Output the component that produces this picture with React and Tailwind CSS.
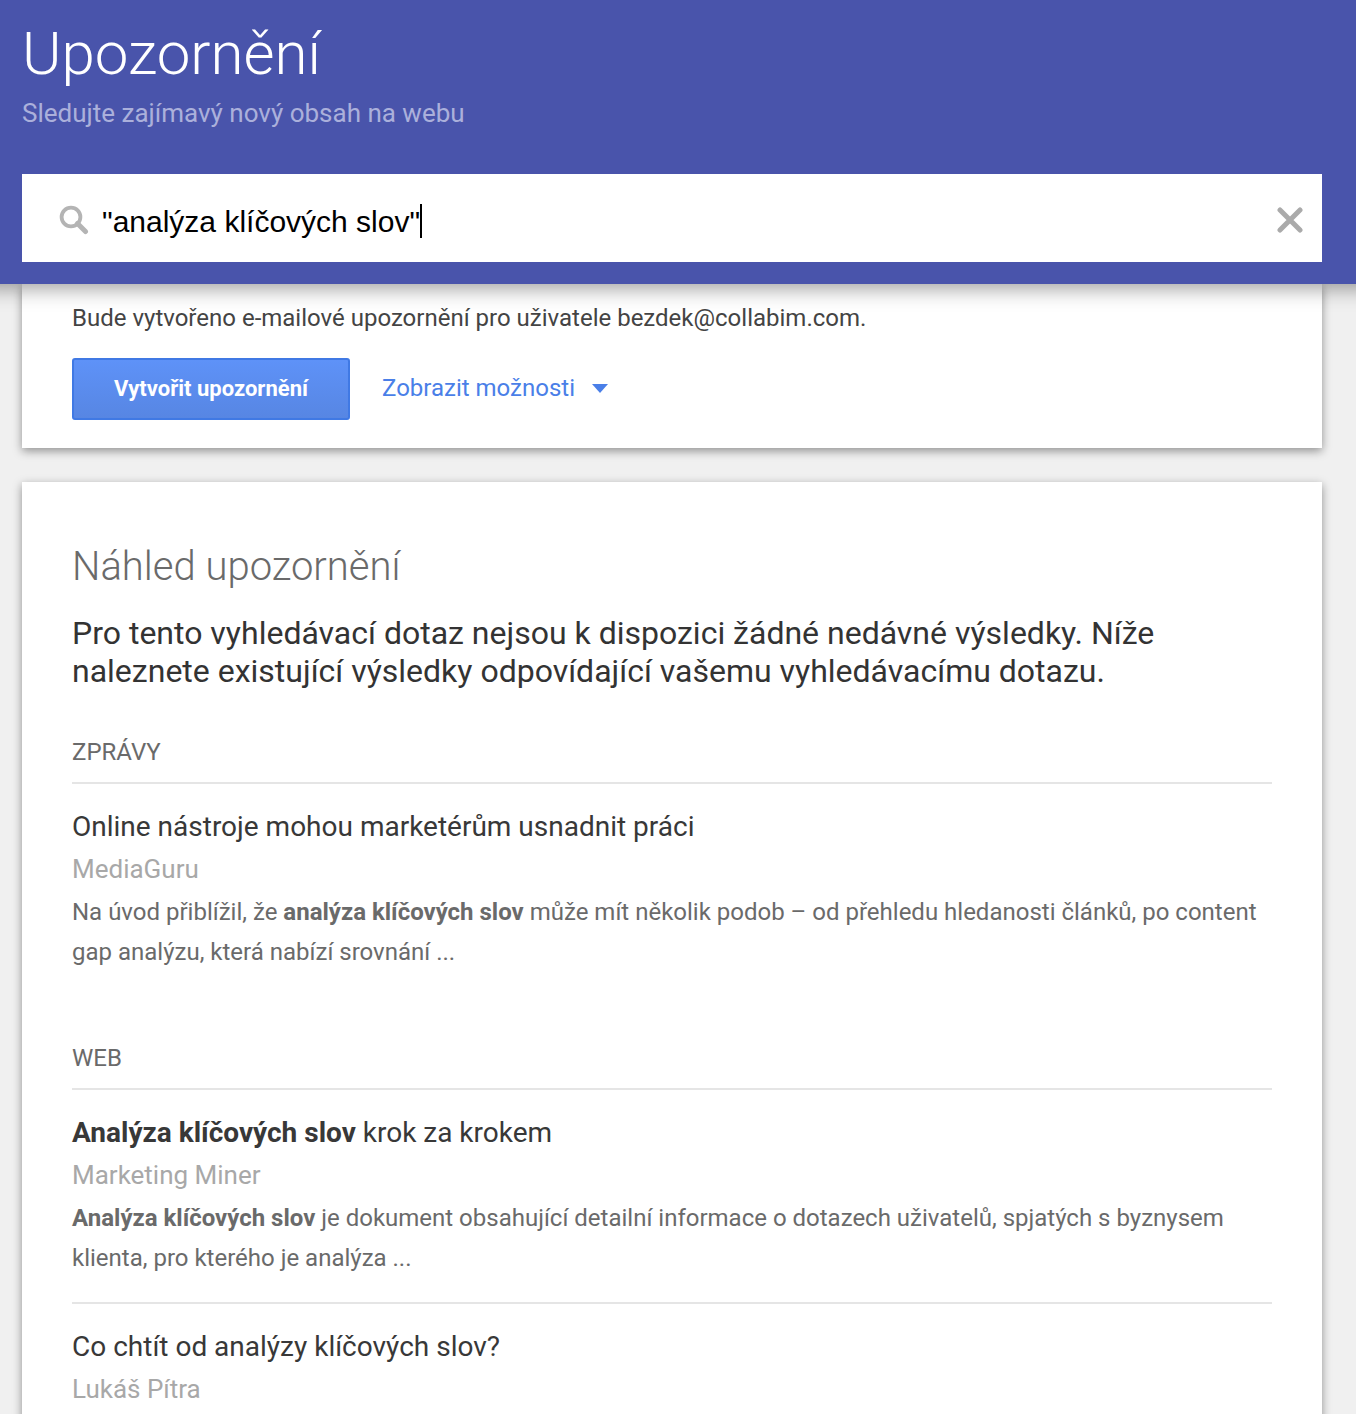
const news = [
  {
    title: <>Online nástroje mohou marketérům usnadnit práci</>,
    source: 'MediaGuru',
    snippet: (
      <>
        Na úvod přiblížil, že <b>analýza klíčových slov</b> může mít několik podob – od přehledu hledanosti článků, po content
        gap analýzu, která nabízí srovnání ...
      </>
    )
  }
];

const web = [
  {
    title: <><b>Analýza klíčových slov</b> krok za krokem</>,
    source: 'Marketing Miner',
    snippet: (
      <>
        <b>Analýza klíčových slov</b> je dokument obsahující detailní informace o dotazech uživatelů, spjatých s byznysem
        klienta, pro kterého je analýza ...
      </>
    )
  },
  {
    title: <>Co chtít od analýzy klíčových slov?</>,
    source: 'Lukáš Pítra'
  }
];

export default function App() {
  return (
    <div className="h-[1414px] overflow-hidden bg-[#f0f0f0] font-['Roboto',sans-serif]">
      <header className="relative z-10 h-[284px] bg-[#4954ab] pl-[22px] pr-[34px] shadow-[0_-16px_20px_20px_rgba(0,0,0,0.4)]">
        <h1 className="pt-[19px] text-[60px] leading-[70px] font-light text-white">Upozornění</h1>
        <p className="mt-[9px] text-[26px] leading-[30px] text-[#abb0db]">Sledujte zajímavý nový obsah na webu</p>
        <SearchBox />
      </header>

      <main className="pl-[22px] pr-[34px]">
        <section className="h-[164px] bg-white px-[50px] pt-[18px] shadow-[0_3px_9px_rgba(0,0,0,0.4)]">
          <p className="text-[24px] leading-[32px] text-[#444]">
            Bude vytvořeno e-mailové upozornění pro uživatele bezdek@collabim.com.
          </p>
          <div className="mt-6 flex items-center gap-8">
            <button className="h-[62px] w-[278px] rounded-[3px] border-2 border-[#4079e4] bg-gradient-to-b from-[#5e92f8] to-[#5786e3] pb-[2px] text-[22px] font-bold text-white">
              Vytvořit upozornění
            </button>
            <button className="flex items-center gap-[17px] pb-[2px] text-[24px] text-[#4a7fe8]">
              Zobrazit možnosti
              <svg className="h-[9px] w-4" viewBox="0 0 16 9">
                <path d="M0 0h16L8 9z" fill="currentColor" />
              </svg>
            </button>
          </div>
        </section>

        <section className="mt-[34px] h-[1000px] bg-white px-[50px] pt-[61px] shadow-[0_3px_9px_rgba(0,0,0,0.4)]">
          <h2 className="text-[40px] leading-[48px] font-light text-[#6a6a6a]">Náhled upozornění</h2>
          <p className="mt-[23px] text-[32px] leading-[38px] text-[#333]">
            Pro tento vyhledávací dotaz nejsou k dispozici žádné nedávné výsledky. Níže naleznete existující výsledky
            odpovídající vašemu vyhledávacímu dotazu.
          </p>
          <ResultGroup label="Zprávy" results={news} />
          <ResultGroup label="Web" results={web} />
        </section>
      </main>
    </div>
  );
}

function SearchBox() {
  return (
    <div className="mt-[46px] flex h-[88px] items-center bg-white pt-1 pl-[37px] pr-[19px]">
      <svg className="h-[30px] w-[30px]" viewBox="0 0 30 30" fill="none" stroke="#b4b4b4">
        <circle cx="12" cy="12" r="9.4" strokeWidth="3.8" />
        <path d="M18.5 18.5l8 8" strokeWidth="5" strokeLinecap="round" />
      </svg>
      <div className="ml-[13px] flex items-center pt-[2px] font-['Liberation_Sans',sans-serif] text-[30px] leading-[34px] text-black">
        <span className="pt-[2px]">"analýza klíčových slov"</span>
        <span className="h-[34px] w-[2px] bg-black" />
      </div>
      <svg className="ml-auto h-[26px] w-[26px]" viewBox="0 0 26 26" stroke="#aaa" strokeWidth="5" strokeLinecap="round">
        <path d="M3 3l20 20M23 3L3 23" />
      </svg>
    </div>
  );
}

function ResultGroup({ label, results }) {
  return (
    <div className="mt-[47px] mb-[71px]">
      <h3 className="border-b-2 border-[#e5e5e5] pb-[15px] text-[24px] leading-[30px] text-[#6a6a6a] uppercase">{label}</h3>
      {results.map((result) => (
        <Result key={result.source} {...result} />
      ))}
    </div>
  );
}

function Result({ title, source, snippet }) {
  return (
    <article className="border-b-2 border-[#e5e5e5] pt-6 pb-6 last:border-b-0 last:pb-0">
      <h4 className="text-[28px] leading-[38px] text-[#383838]">{title}</h4>
      <p className="mt-1 text-[26px] leading-[38px] text-[#a8a8a8]">{source}</p>
      {snippet && <p className="mt-1 text-[24px] leading-[40px] text-[#6a6a6a]">{snippet}</p>}
    </article>
  );
}
